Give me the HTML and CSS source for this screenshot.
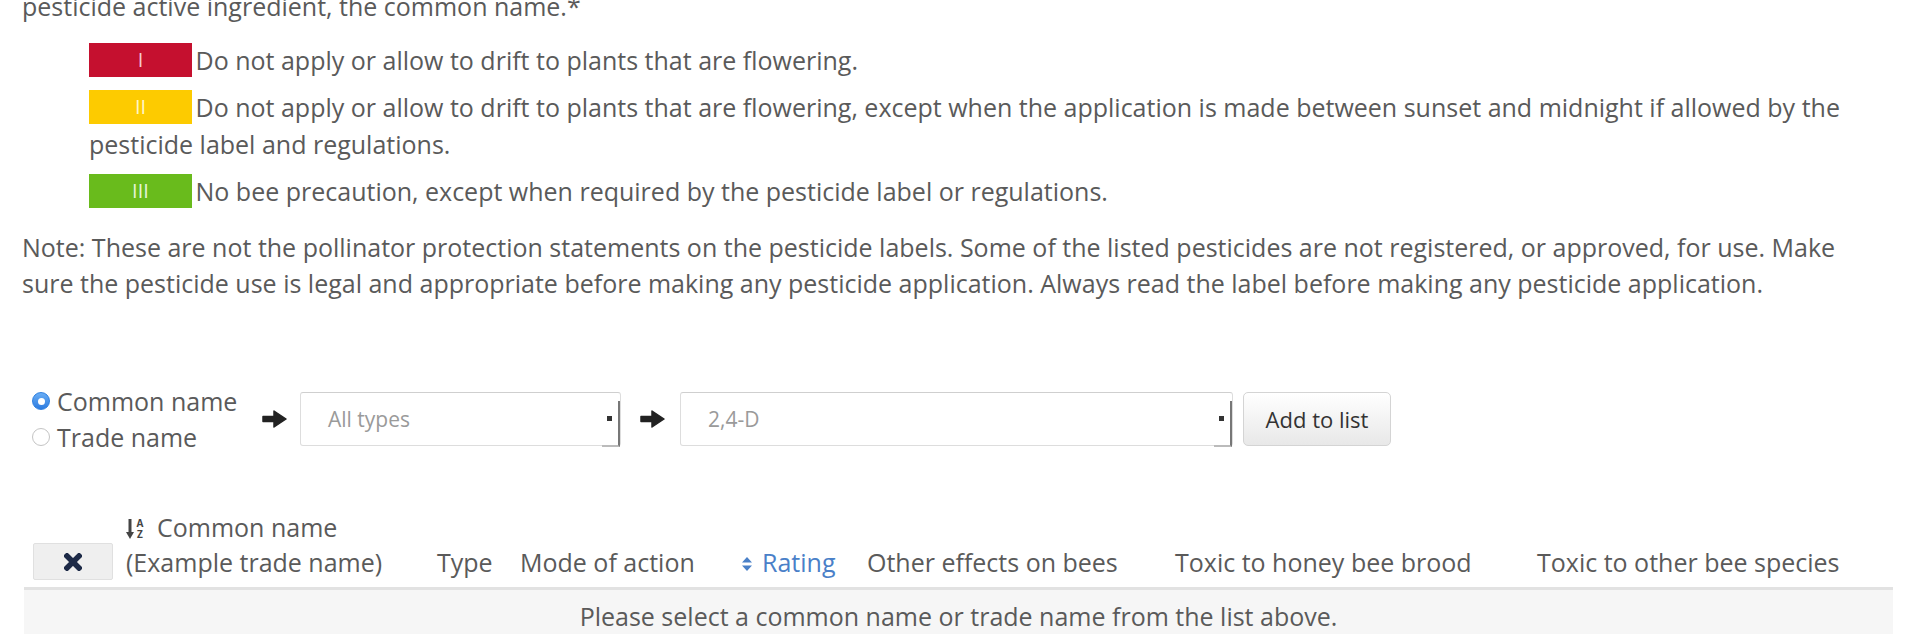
FILE: index.html
```html
<!DOCTYPE HTML>
<html lang="en">
<head>
    <meta charset="utf-8" />
    <meta name="viewport" content="width=device-width, initial-scale=1" />
    <title>Bee Precaution Pesticide Ratings</title>
    <link rel="stylesheet" href="styles.css">
</head>
<body>
    <div class="page">
        <p class="intro">pesticide active ingredient, the common name.*</p>

        <ul class="legend">
            <li><span class="swatch swatch-red">I</span> Do not apply or allow to drift to plants that are flowering.</li>
            <li><span class="swatch swatch-yellow">II</span> Do not apply or allow to drift to plants that are flowering, except when the application is made between sunset and midnight if allowed by the pesticide label and regulations.</li>
            <li><span class="swatch swatch-green">III</span> No bee precaution, except when required by the pesticide label or regulations.</li>
        </ul>

        <p class="note">Note: These are not the pollinator protection statements on the pesticide labels. Some of the listed pesticides are not registered, or approved, for use. Make sure the pesticide use is legal and appropriate before making any pesticide application. Always read the label before making any pesticide application.</p>

        <div class="controls">
            <div class="name-choice">
                <label class="radio-row"><span class="radio radio-on"></span>Common name</label>
                <label class="radio-row"><span class="radio"></span>Trade name</label>
            </div>
            <svg class="arrow" width="25" height="20" viewBox="0 0 25 20">
                <path d="M1 7.5 H12 V2 L24 10 L12 18 V12.5 H1 Z" fill="#222" stroke="#222" stroke-width="1.5" stroke-linejoin="round"/>
            </svg>
            <div class="fake-select select-type">
                <span class="select-value">All types</span>
                <span class="select-knob"></span>
            </div>
            <svg class="arrow arrow-second" width="25" height="20" viewBox="0 0 25 20">
                <path d="M1 7.5 H12 V2 L24 10 L12 18 V12.5 H1 Z" fill="#222" stroke="#222" stroke-width="1.5" stroke-linejoin="round"/>
            </svg>
            <div class="fake-select select-name">
                <span class="select-value">2,4-D</span>
                <span class="select-knob"></span>
            </div>
            <button class="add-btn">Add to list</button>
        </div>

        <table class="results">
            <colgroup>
                <col style="width: 92px">
                <col style="width: 311px">
                <col style="width: 83px">
                <col style="width: 221px">
                <col style="width: 126px">
                <col style="width: 308px">
                <col style="width: 362px">
                <col style="width: 366px">
            </colgroup>
            <thead>
                <tr>
                    <th class="clear-cell">
                        <button class="clear-btn" title="Clear list">
                            <svg width="18" height="18" viewBox="0 0 18 18">
                                <path d="M3 3 L15 15 M15 3 L3 15" stroke="#1d2a47" stroke-width="5.5" stroke-linecap="square"/>
                            </svg>
                        </button>
                    </th>
                    <th>
                        <span class="sort-alpha">
                            <svg width="22" height="24" viewBox="0 0 22 24">
                                <path d="M4 2 V16" stroke="#444" stroke-width="3"/>
                                <path d="M0 15 H8 L4 22 Z" fill="#444"/>
                                <text x="14" y="10" font-size="10" font-weight="bold" font-family="Open Sans" text-anchor="middle" fill="#444">A</text>
                                <text x="14" y="21" font-size="10" font-weight="bold" font-family="Open Sans" text-anchor="middle" fill="#444">Z</text>
                            </svg>
                        </span>Common name<br>(Example trade name)
                    </th>
                    <th>Type</th>
                    <th>Mode of action</th>
                    <th class="sortable">
                        <svg class="sort-icon" width="12" height="20" viewBox="0 0 12 20">
                            <path d="M1 8.5 L6 3 L11 8.5 Z M1 11.5 L6 17 L11 11.5 Z" fill="#4a80c8"/>
                        </svg>Rating
                    </th>
                    <th>Other effects on bees</th>
                    <th>Toxic to honey bee brood</th>
                    <th>Toxic to other bee species</th>
                </tr>
            </thead>
            <tbody>
                <tr>
                    <td class="empty-row" colspan="8">Please select a common name or trade name from the list above.</td>
                </tr>
            </tbody>
        </table>
    </div>
</body>
</html>
```

FILE: styles.css
```css
body {
    margin: 0;
    font-family: "Open Sans", "Liberation Sans", sans-serif;
    font-size: 25px;
    color: #5a5a5a;
    background-color: #ffffff;
    overflow: hidden;
}

.page {
    padding: 0 27px 0 22px;
}

.intro {
    margin: -12px 0 0 0;
    line-height: 36px;
}

.legend {
    list-style: none;
    margin: 18px 0 0 0;
    padding-left: 67px;
}

.legend li {
    line-height: 37px;
    margin-bottom: 10px;
}

.swatch {
    display: inline-block;
    width: 103px;
    height: 34px;
    line-height: 34px;
    margin-right: -3px;
    vertical-align: top;
    margin-top: 1px;
    text-align: center;
    font-size: 20px;
    color: #fff;
}

.swatch-red {
    background-color: #c5102f;
    color: #f6c9d0;
}

.swatch-yellow {
    background-color: #fdcb00;
    color: #fff6cc;
}

.swatch-green {
    background-color: #69bb1c;
    color: #e4f5d4;
}

.note {
    margin: 19px 0 0 0;
    line-height: 36px;
}

.controls {
    display: flex;
    align-items: center;
    margin-top: 82px;
}

.name-choice {
    display: flex;
    flex-direction: column;
    width: 230px;
    margin-left: 10px;
}

.radio-row {
    display: flex;
    align-items: center;
    line-height: 36px;
}

.radio {
    width: 18px;
    height: 18px;
    border-radius: 50%;
    border: 1px solid #c4c4c4;
    background: #fff;
    margin-right: 7px;
    box-sizing: border-box;
    display: flex;
    justify-content: center;
    align-items: center;
}

.radio-on {
    border-color: #2f80e0;
    background: linear-gradient(#6aaef5, #2c7be0);
}

.radio-on::after {
    content: "";
    width: 7px;
    height: 7px;
    border-radius: 50%;
    background: #fff;
}

.arrow {
    flex-shrink: 0;
    margin-right: 13px;
}

.arrow-second {
    margin-left: 19px;
    margin-right: 15px;
}

.fake-select {
    position: relative;
    height: 54px;
    box-sizing: border-box;
    border: 1px solid #ddd;
    border-top-color: #cfcfcf;
    border-radius: 3px;
    background: #fff;
    display: flex;
    align-items: center;
    padding-left: 27px;
    font-size: 21px;
    color: #9a9a9a;
}

.select-type {
    width: 321px;
}

.select-name {
    width: 553px;
}

.select-knob {
    position: absolute;
    right: 0;
    top: 8px;
    bottom: -2px;
    width: 16px;
    border-right: 2px solid #777;
    border-bottom: 2px solid #bbb;
}

.select-knob::before {
    content: "";
    position: absolute;
    left: 5px;
    top: 15px;
    width: 5px;
    height: 5px;
    background: #333;
}

.add-btn {
    margin-left: 10px;
    width: 148px;
    height: 54px;
    font-family: "Open Sans", "Liberation Sans", sans-serif;
    font-size: 22px;
    color: #333;
    border: 1px solid #d4d4d4;
    border-radius: 5px;
    background: linear-gradient(#ffffff, #e8e8e8);
    cursor: pointer;
}

.results {
    margin: 55px 0 0 2px;
    width: 1869px;
    table-layout: fixed;
    border-collapse: collapse;
}

.results th {
    text-align: left;
    vertical-align: bottom;
    font-weight: normal;
    line-height: 35px;
    padding: 0 10px 7px 10px;
    border-bottom: 3px solid #e2e2e2;
    white-space: nowrap;
}

.results .clear-cell {
    padding-left: 9px;
    padding-right: 0;
}

.clear-btn {
    width: 80px;
    height: 37px;
    display: flex;
    align-items: center;
    justify-content: center;
    background: #efefef;
    border: 1px solid #e0e0e0;
    border-radius: 2px;
    cursor: pointer;
}

.sort-alpha {
    display: inline-block;
    width: 31px;
    height: 24px;
    line-height: 0;
    vertical-align: -4px;
}

.sortable {
    color: #4a80c8;
}

.sort-icon {
    margin-right: 9px;
    vertical-align: -2px;
}

.empty-row {
    background: #f6f6f6;
    text-align: center;
    line-height: 36px;
    padding: 8px 0 8px 0;
}
```
